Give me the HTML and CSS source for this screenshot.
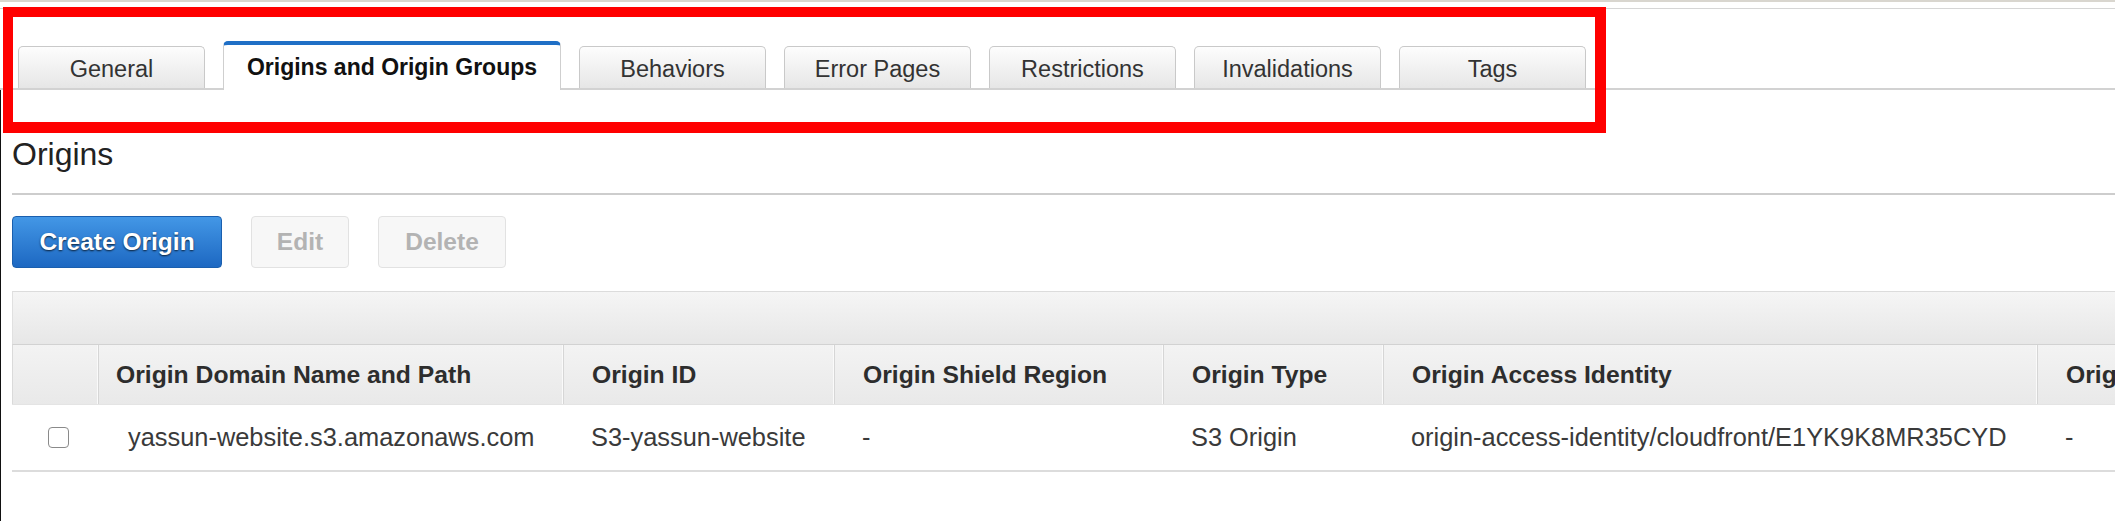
FILE: index.html
```html
<!DOCTYPE html>
<html lang="en">
<head>
<meta charset="utf-8">
<title>CloudFront Distribution - Origins</title>
<link rel="stylesheet" href="styles.css">
</head>
<body>
<div class="top-strip"></div>
<div class="panel">
  <div class="tabs">
    <div class="tab">General</div>
    <div class="tab tab-active">Origins and Origin Groups</div>
    <div class="tab">Behaviors</div>
    <div class="tab">Error Pages</div>
    <div class="tab">Restrictions</div>
    <div class="tab">Invalidations</div>
    <div class="tab">Tags</div>
  </div>
  <div class="content">
    <h2 class="section-title">Origins</h2>
    <div class="toolbar">
      <button class="btn btn-primary">Create Origin</button>
      <button class="btn btn-disabled btn-edit">Edit</button>
      <button class="btn btn-disabled btn-delete">Delete</button>
    </div>
    <div class="table">
      <div class="table-bar"></div>
      <div class="row row-head">
        <div class="cell cell-check"></div>
        <div class="cell cell-first">Origin Domain Name and Path</div>
        <div class="cell">Origin ID</div>
        <div class="cell">Origin Shield Region</div>
        <div class="cell">Origin Type</div>
        <div class="cell">Origin Access Identity</div>
        <div class="cell">Origin Protocol Policy</div>
      </div>
      <div class="row row-data">
        <div class="cell cell-check"><span class="checkbox"></span></div>
        <div class="cell cell-first">yassun-website.s3.amazonaws.com</div>
        <div class="cell">S3-yassun-website</div>
        <div class="cell">-</div>
        <div class="cell">S3 Origin</div>
        <div class="cell">origin-access-identity/cloudfront/E1YK9K8MR35CYD</div>
        <div class="cell">-</div>
      </div>
    </div>
  </div>
</div>
<div class="highlight"></div>
</body>
</html>
```
FILE: styles.css
```css
html, body {
  margin: 0;
  padding: 0;
  background: #ffffff;
  overflow: hidden;
}

body {
  font-family: "Liberation Sans", Arial, sans-serif;
  color: #333;
  width: 2115px;
  height: 521px;
  position: relative;
}

.top-strip {
  height: 2px;
  background: #d9d6cf;
}

.panel {
  margin-top: 6px;
  border-top: 1px solid #d6d6d6;
}

.tabs {
  display: flex;
  align-items: flex-end;
  gap: 18px;
  padding: 32px 0 0 18px;
  border-bottom: 2px solid #d2d2d2;
}

.tab {
  box-sizing: border-box;
  width: 187px;
  height: 42px;
  display: flex;
  align-items: center;
  justify-content: center;
  font-size: 23.5px;
  color: #333;
  background: linear-gradient(#fdfdfd, #e6e6e6);
  border: 1px solid #c9c9c9;
  border-bottom: none;
  border-radius: 5px 5px 0 0;
  padding-top: 3px;
}

.tab-active {
  width: 338px;
  height: 49px;
  margin-bottom: -2px;
  background: #ffffff;
  border-color: #cfcfcf;
  border-top: 4px solid #1f6fc6;
  font-weight: bold;
  color: #111;
  font-size: 23px;
  padding-top: 0;
}

.content {
  border-left: 1px solid #111;
  padding-left: 11px;
  min-height: 431px;
}

.section-title {
  margin: 0;
  padding-top: 46px;
  font-size: 32px;
  line-height: 36px;
  font-weight: normal;
  color: #222;
}

.toolbar {
  margin-top: 21px;
  border-top: 2px solid #cdcdcd;
  padding-top: 21px;
  display: flex;
  gap: 29px;
}

.btn {
  box-sizing: border-box;
  height: 52px;
  font-family: "Liberation Sans", Arial, sans-serif;
  font-size: 24.5px;
  font-weight: bold;
  border-radius: 4px;
  padding: 0;
}

.btn-primary {
  width: 210px;
  color: #fff;
  background: linear-gradient(#4397e6, #1d68c2);
  border: 1px solid #1a5fae;
  text-shadow: 0 1px 2px rgba(0, 0, 0, 0.75);
}

.btn-disabled {
  color: #b3b3b3;
  background: #f7f7f7;
  border: 1px solid #e2e2e2;
}

.btn-edit { width: 98px; }
.btn-delete { width: 128px; }

.table {
  margin-top: 23px;
  width: 2300px;
}

.table-bar {
  height: 52px;
  border-top: 1px solid #dcdcdc;
  border-left: 1px solid #e0e0e0;
  background: linear-gradient(#f5f5f5, #e7e7e7);
}

.row {
  display: grid;
  grid-template-columns: 86px 465px 271px 329px 220px 654px 275px;
  align-items: stretch;
}

.row-head {
  height: 60px;
  background: linear-gradient(#f3f3f3, #e9e9e9);
  border-top: 1px solid #d2d2d2;
  border-left: 1px solid #dadada;
  box-sizing: border-box;
}

.row-head .cell {
  font-weight: bold;
  font-size: 24.7px;
  color: #2d2d2d;
  border-right: 1px solid #d6d6d6;
  box-shadow: inset -1px 0 0 #fafafa;
}

.row-data {
  height: 68px;
  border-top: 1px solid #e4e4e4;
  border-bottom: 2px solid #dcdcdc;
  box-sizing: border-box;
}

.cell {
  display: flex;
  align-items: center;
  padding-left: 28px;
  white-space: nowrap;
  overflow: hidden;
  font-size: 25.4px;
  color: #3a3a3a;
}

.row-head .cell-first { padding-left: 17px; }
.row-data .cell-first { padding-left: 30px; }

.cell-check {
  padding-left: 36px;
}

.checkbox {
  box-sizing: border-box;
  width: 21px;
  height: 21px;
  border: 1.5px solid #8a8a8a;
  border-radius: 4px;
  background: #fff;
}

.highlight {
  position: absolute;
  left: 3px;
  top: 7px;
  width: 1603px;
  height: 126px;
  box-sizing: border-box;
  border: 10px solid #ff0000;
  border-right-width: 11px;
  border-bottom-width: 11px;
  pointer-events: none;
}
```
